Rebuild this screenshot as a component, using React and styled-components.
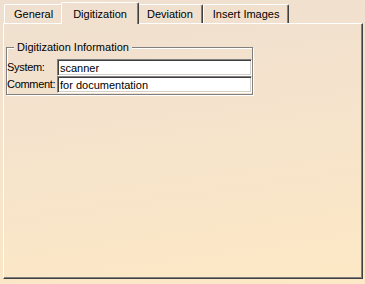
import styled, { createGlobalStyle, css } from "styled-components";

const bg = "linear-gradient(172deg, #efdfcf 0%, #f5e3cc 45%, #fde9c5 100%)";

const GlobalStyle = createGlobalStyle`
  html, body {
    margin: 0;
    height: 100%;
  }
  body {
    width: 365px;
    height: 284px;
    overflow: hidden;
    background: ${bg};
    background-attachment: fixed;
    font-family: "Liberation Sans", Arial, sans-serif;
    font-size: 11px;
    color: #000;
  }
`;

const Page = styled.div`
  padding: 2px 0 0 3px;
`;

const TabStrip = styled.div`
  display: flex;
  align-items: flex-end;
  height: 21px;
  padding-left: 1px;
  position: relative;
  z-index: 1;
`;

const Tab = styled.div`
  box-sizing: border-box;
  height: 19px;
  padding: 0 9px;
  display: flex;
  align-items: center;
  white-space: nowrap;
  border-top: 1px solid #fff;
  border-left: 1px solid #fff;
  border-right: 1px solid #404040;
  border-radius: 2px 2px 0 0;
  box-shadow: inset -1px 0 0 #808080;
  ${(p) =>
    p.active &&
    css`
      height: 22px;
      margin: 0 -2px -1px;
      padding: 1px 11px 0;
      background: ${bg};
      background-attachment: fixed;
      position: relative;
      z-index: 2;
    `}
`;

const Panel = styled.div`
  box-sizing: border-box;
  width: 360px;
  height: 256px;
  border-top: 1px solid #fff;
  border-left: 1px solid #fff;
  border-right: 1px solid #404040;
  border-bottom: 1px solid #404040;
  box-shadow: inset -1px -1px 0 #808080;
  padding: 0 0 0 2px;
  display: flex;
  flex-direction: column;
  align-items: flex-start;
`;

const Group = styled.fieldset`
  box-sizing: border-box;
  width: 247px;
  margin: 17px 0 0 0;
  padding: 0 0 1px 0;
  min-width: 0;
  border: 1px solid #808080;
  box-shadow: inset 1px 1px 0 #fff, 1px 1px 0 #fff;
`;

const Title = styled.legend`
  margin-left: 7px;
  padding: 0 3px;
  line-height: 13px;
  background: ${bg};
  background-attachment: fixed;
`;

const Form = styled.div`
  display: grid;
  grid-template-columns: 50px 1fr;
  margin-top: 5px;
  align-items: center;
`;

const Label = styled.label`
  white-space: nowrap;
  line-height: 17px;
  letter-spacing: -0.3px;
`;

const Field = styled.input`
  box-sizing: border-box;
  height: 17px;
  width: 100%;
  margin: 0;
  padding: 0 0 0 2px;
  font: inherit;
  color: #000;
  background: #fff;
  border: 1px solid;
  border-color: #808080 #fff #fff #808080;
  box-shadow: inset 1px 1px 0 #404040, inset -1px -1px 0 #d4d0c8;
  outline: none;
`;

const tabs = ["General", "Digitization", "Deviation", "Insert Images"];

export default function App() {
  return (
    <Page>
      <GlobalStyle />
      <TabStrip>
        {tabs.map((t) => (
          <Tab key={t} active={t === "Digitization"}>
            {t}
          </Tab>
        ))}
      </TabStrip>
      <Panel>
        <Group>
          <Title>Digitization Information</Title>
          <Form>
            <Label>System:</Label>
            <Field readOnly defaultValue="scanner" />
            <Label>Comment:</Label>
            <Field readOnly defaultValue="for documentation" />
          </Form>
        </Group>
      </Panel>
    </Page>
  );
}
